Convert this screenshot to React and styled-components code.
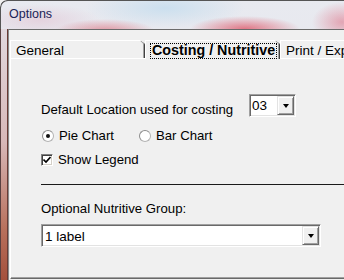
import React from "react";
import styled, { createGlobalStyle } from "styled-components";

const GlobalStyle = createGlobalStyle`
  html, body {
    margin: 0;
    padding: 0;
    background: #f0f0f0;
  }
  body {
    font-family: "Liberation Sans", Arial, sans-serif;
    font-size: 13.2px;
    color: #000;
  }
`;

const Window = styled.div`
  width: 344px;
  height: 280px;
  overflow: hidden;
  display: flex;
  flex-direction: column;
  border-top-left-radius: 7px;
  box-shadow: inset 1px 1px 0 #555;
  background:
    radial-gradient(ellipse 50px 12px at 105px 31px, rgba(218, 95, 110, 0.6), rgba(218, 95, 110, 0.25) 60%, transparent),
    radial-gradient(ellipse 55px 13px at 245px 29px, rgba(222, 80, 98, 0.75), rgba(222, 80, 98, 0.3) 60%, transparent),
    radial-gradient(ellipse 30px 20px at 342px 22px, rgba(222, 120, 140, 0.6), transparent),
    radial-gradient(ellipse 80px 20px at 165px 8px, rgba(200, 222, 238, 0.9), transparent),
    radial-gradient(ellipse 60px 16px at 40px 20px, rgba(228, 205, 218, 0.8), transparent),
    linear-gradient(#e8eaf0, #e4dee6);
`;

const TitleBar = styled.div`
  height: 29px;
  flex: none;
  display: flex;
  align-items: center;
  padding: 0 0 2px 9px;
  box-sizing: border-box;
`;

const Title = styled.span`
  font-size: 12.5px;
  color: #1b2457;
`;

const Body = styled.div`
  flex: 1;
  display: flex;
  min-height: 0;
`;

const Frame = styled.div`
  width: 8px;
  flex: none;
  box-shadow: inset 1px 0 0 #5a4040, inset -1px 0 0 #6a3a34;
  background: linear-gradient(#e2d8de 0%, #d8b8b8 45%, #b8705c 80%, #a4503c 100%);
`;

const Client = styled.div`
  flex: 1;
  display: flex;
  flex-direction: column;
  background: #f0f0f0;
  border-top: 1px solid #6b6b6b;
  border-left: 1px solid #8a8a8a;
  padding: 10px 0 1px 1px;
`;

const TabStrip = styled.div`
  display: flex;
  height: 18px;
  flex: none;
  position: relative;
  z-index: 1;
`;

const Tab = styled.div`
  position: relative;
  width: 135px;
  flex: none;
  box-sizing: border-box;
  height: ${(p) => (p.active ? "19px" : "18px")};
  padding: ${(p) => (p.active ? "2px 0 0 4px" : "3px 0 0 5px")};
  border-top: 1px solid #fff;
  border-left: 1px solid #fff;
  border-right: 1px solid #404040;
  box-shadow: inset -1px 0 0 #a0a0a0;
  background: #f0f0f0;
  font-size: ${(p) => (p.active ? "14.3px" : "13.5px")};
  line-height: 14px;
  font-weight: ${(p) => (p.active ? "bold" : "normal")};
  white-space: nowrap;

  &::after {
    content: "";
    position: absolute;
    top: -1px;
    right: -1px;
    border-top: 4px solid #f0f0f0;
    border-left: 4px solid transparent;
  }
  &::before {
    content: "";
    position: absolute;
    top: -1px;
    right: 0;
    width: 5px;
    height: 1px;
    background: #9a9a9a;
    transform: translate(1px, 2px) rotate(45deg);
  }
`;

const Focus = styled.span`
  display: inline-block;
  border: 1px dotted #000;
  padding: 0 1px 1px 1px;
  line-height: 13px;
`;

const Panel = styled.div`
  flex: 1;
  margin-right: 2px;
  border-top: 1px solid #fff;
  border-left: 1px solid #fff;
  border-right: 1px solid #696969;
  border-bottom: 1px solid #696969;
  box-shadow: inset -1px -1px 0 #a0a0a0;
  padding: 35px 10px 0 30px;
  display: flex;
  flex-direction: column;
`;

const LocationRow = styled.div`
  display: flex;
  align-items: flex-start;
  gap: 16px;
`;

const Label = styled.span`
  line-height: 16px;
  padding-top: ${(p) => p.offset || 0}px;
  white-space: nowrap;
`;

const Combo = styled.div`
  width: ${(p) => p.width}px;
  height: 23px;
  box-sizing: border-box;
  display: flex;
  background: #fff;
  border-top: 1px solid #a0a0a0;
  border-left: 1px solid #a0a0a0;
  border-right: 1px solid #fff;
  border-bottom: 1px solid #fff;
  box-shadow: inset 1px 1px 0 #696969, inset -1px -1px 0 #e3e3e3;
  padding: 1px;
`;

const ComboText = styled.span`
  flex: 1;
  padding: ${(p) => p.pad};
  line-height: 16px;
  font-size: 13.5px;
`;

const DropButton = styled.div`
  width: 17px;
  flex: none;
  box-sizing: border-box;
  background: #f0f0f0;
  border-top: 1px solid #e3e3e3;
  border-left: 1px solid #e3e3e3;
  border-right: 1px solid #696969;
  border-bottom: 1px solid #696969;
  box-shadow: inset 1px 1px 0 #fff, inset -1px -1px 0 #a0a0a0;
  display: flex;
  align-items: center;
  justify-content: center;

  &::after {
    content: "";
    border-top: 4px solid #000;
    border-left: 3.5px solid transparent;
    border-right: 3.5px solid transparent;
    margin-top: 1px;
  }
`;

const OptionRow = styled.div`
  display: flex;
  align-items: center;
  gap: 25px;
  margin-top: ${(p) => p.top}px;
  line-height: 16px;
`;

const Option = styled.label`
  display: flex;
  align-items: center;
  gap: 5px;
`;

const Radio = styled.span`
  width: 12px;
  height: 12px;
  box-sizing: border-box;
  border-radius: 50%;
  border: 1px solid #b4b4b4;
  border-top-color: #8c8c8c;
  border-left-color: #8c8c8c;
  background: #fff;
  display: flex;
  align-items: center;
  justify-content: center;
  margin-left: ${(p) => p.shift || 0}px;

  &::after {
    content: "";
    display: ${(p) => (p.checked ? "block" : "none")};
    width: 4px;
    height: 4px;
    border-radius: 50%;
    background: #111;
  }
`;

const Check = styled.span`
  width: 12px;
  height: 12px;
  box-sizing: border-box;
  background: #fff;
  border-top: 1px solid #808080;
  border-left: 1px solid #808080;
  border-right: 1px solid #fff;
  border-bottom: 1px solid #fff;
  box-shadow: inset 1px 1px 0 #404040, inset -1px -1px 0 #d4d0c8;
  display: flex;
  align-items: center;
  justify-content: center;
`;

const Divider = styled.div`
  height: 1px;
  background: #1a1a1a;
  margin-top: 16px;
`;

const GroupLabel = styled.div`
  margin-top: 16px;
  line-height: 16px;
`;

const GroupCombo = styled(Combo)`
  margin-top: 7px;
`;

export default function App() {
  return (
    <>
      <GlobalStyle />
      <Window>
        <TitleBar>
          <Title>Options</Title>
        </TitleBar>
        <Body>
          <Frame />
          <Client>
            <TabStrip>
              <Tab>General</Tab>
              <Tab active>
                <Focus>Costing / Nutritive</Focus>
              </Tab>
              <Tab>Print / Export</Tab>
            </TabStrip>
            <Panel>
              <LocationRow>
                <Label offset={8}>Default Location used for costing</Label>
                <Combo width={47}>
                  <ComboText pad="2px 0 0 1px">03</ComboText>
                  <DropButton />
                </Combo>
              </LocationRow>
              <OptionRow top={10}>
                <Option>
                  <Radio checked shift={1} />
                  Pie Chart
                </Option>
                <Option>
                  <Radio />
                  Bar Chart
                </Option>
              </OptionRow>
              <OptionRow top={8}>
                <Option>
                  <Check>
                    <svg width="8" height="8" viewBox="0 0 8 8">
                      <path d="M0.5 3.5 L3 6 L7.5 1" fill="none" stroke="#000" strokeWidth="1.6" />
                    </svg>
                  </Check>
                  Show Legend
                </Option>
              </OptionRow>
              <Divider />
              <GroupLabel>Optional Nutritive Group:</GroupLabel>
              <GroupCombo width={280}>
                <ComboText pad="3px 0 0 2px">1 label</ComboText>
                <DropButton />
              </GroupCombo>
            </Panel>
          </Client>
        </Body>
      </Window>
    </>
  );
}
